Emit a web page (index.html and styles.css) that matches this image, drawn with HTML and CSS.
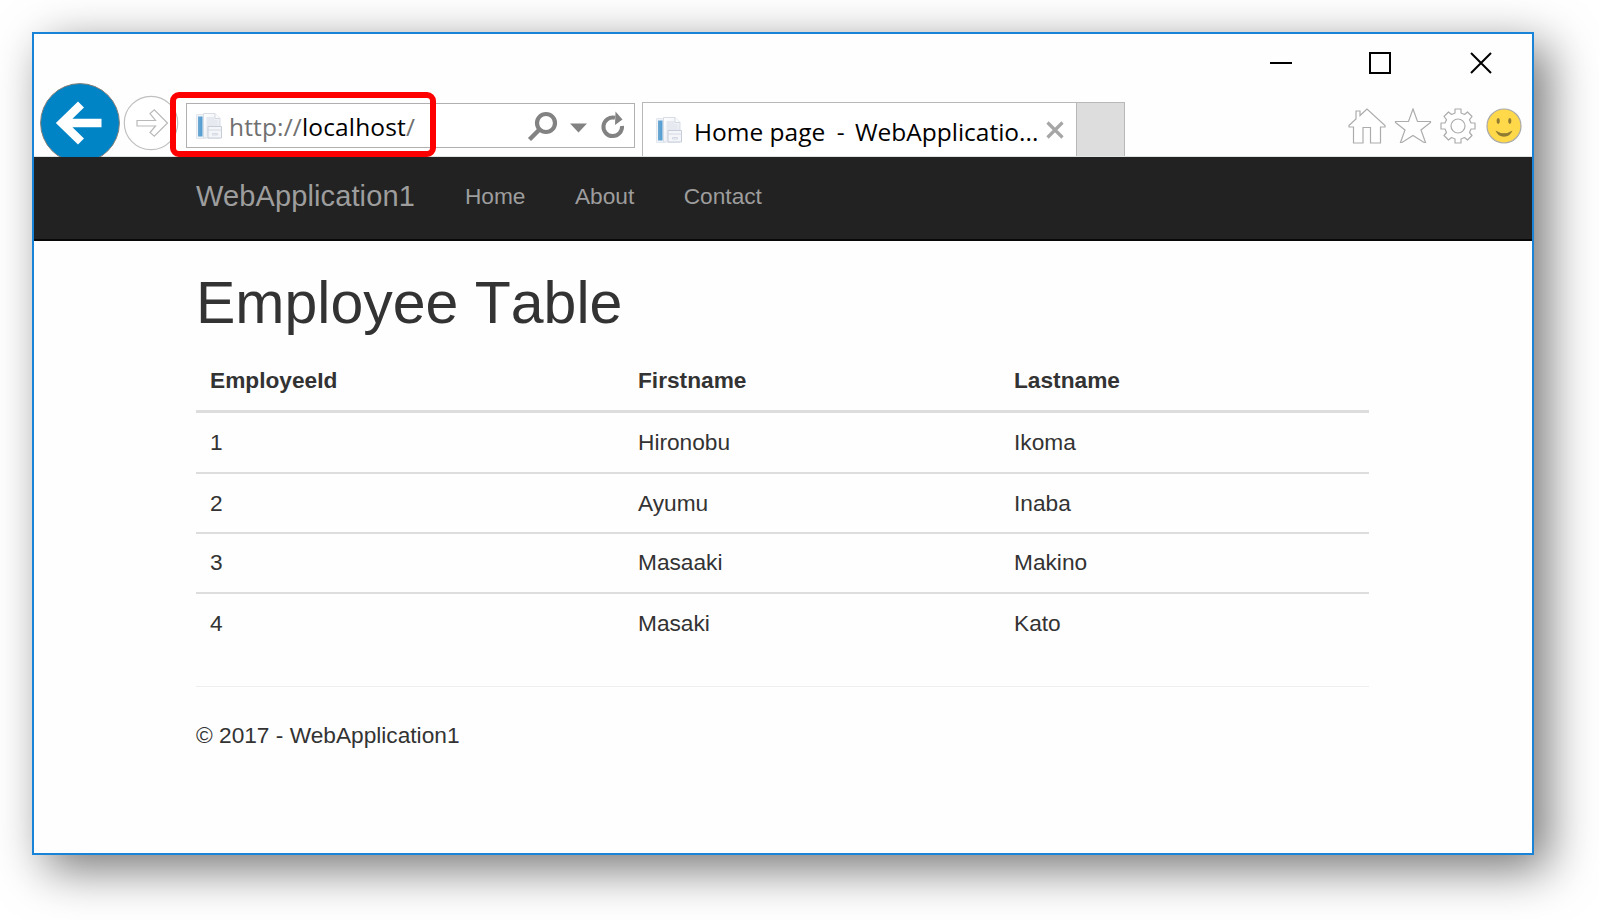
FILE: index.html
```
<!DOCTYPE html>
<html lang="en">
<head>
<meta charset="utf-8">
<title>Home page - WebApplication1</title>
<link rel="stylesheet" href="styles.css">
</head>
<body>
<svg class="defs" width="0" height="0">
  <defs>
    <linearGradient id="bar" x1="0" y1="0" x2="1" y2="0"><stop offset="0" stop-color="#6fa9d2"/><stop offset="1" stop-color="#4f9cd2"/></linearGradient>
    <linearGradient id="sheet" x1="0" y1="0" x2="1" y2="1"><stop offset="0" stop-color="#ffffff"/><stop offset="1" stop-color="#e3e7ee"/></linearGradient>
    <symbol id="page-icon" viewBox="0 0 28 28">
      <path d="M1.500 2.500h8v24h-8z" fill="#f0f4f8" stroke="#e3e8ee"/>
      <path d="M3 4.500h4.500v20H3z" fill="url(#bar)"/>
      <path d="M8.500 1.500h11.500l5 5v19.500h-16.500z" fill="url(#sheet)" stroke="#d8dde5"/>
      <path d="M11.500 5h8v3h3v6.500h-9v9h-2z" fill="#e6e9f0"/>
      <path d="M20 1.500v5h5" fill="#fbfcfd" stroke="#d3d8e1"/>
      <path d="M13 14.500h13.500v11.500h-13.500z" fill="#f4f5f9" stroke="#c6ccd8"/>
      <path d="M13 18h13.500M17.500 21.500h5v1.500h-5z" fill="none" stroke="#d3d8e2"/>
    </symbol>
  </defs>
</svg>
<div class="window">
  <header class="chrome">
    <div class="titlebar">
      <svg width="24" height="24" viewBox="0 0 24 24"><path d="M1 12h22" stroke="#000" stroke-width="2"/></svg>
      <svg width="24" height="24" viewBox="0 0 24 24"><path d="M1 2h20v20h-20z" fill="none" stroke="#000" stroke-width="2"/></svg>
      <svg width="24" height="24" viewBox="0 0 24 24"><path d="M2 2l20 20M22 2l-20 20" stroke="#000" stroke-width="2"/></svg>
    </div>
    <div class="toolbar">
      <svg class="back" width="80" height="74" viewBox="0 0 80 74"><circle cx="40" cy="40" r="39.400" fill="#0084c6" stroke="#857e78" stroke-width="1"/><path d="M61.500 40H23M41 21.500L22 40l19 18.500" fill="none" stroke="#fff" stroke-width="8.600"/></svg>
      <svg class="forward" width="56" height="56" viewBox="0 0 56 56"><circle cx="28" cy="28" r="26.700" fill="#fff" stroke="#c0c0c0" stroke-width="1.200"/><path d="M14 25.500h18.500l-5.500-7 4.300-3.700L44.500 28 31.300 41.200 27 37.500l5.500-6.500H14z" fill="#fff" stroke="#b9b9b9" stroke-width="1.200"/></svg>
      <div class="address">
        <svg width="28" height="28"><use href="#page-icon"/></svg>
        <span class="url">http://<b>localhost</b>/</span>
        <svg class="tools" width="100" height="34" viewBox="0 0 100 34">
          <circle cx="20" cy="14" r="9" fill="none" stroke="#828282" stroke-width="4.200"/><path d="M13.500 20.500L3.500 30.500" stroke="#828282" stroke-width="4.400"/>
          <path d="M44 14.500h17l-8.500 9z" fill="#828282"/>
          <path d="M89 8.800A9.300 9.300 0 1 0 96 17" fill="none" stroke="#828282" stroke-width="4"/><path d="M89.500 2.500l7 8-7.500 5.500z" fill="#828282"/>
        </svg>
      </div>
      <div class="tab">
        <svg width="28" height="28"><use href="#page-icon"/></svg>
        <span class="tab-title">Home page <span class="dash">-</span> WebApplicatio...</span>
        <svg width="18" height="18" viewBox="0 0 18 18"><path d="M1.500 1.500l15 15M16.500 1.500l-15 15" stroke="#a6a6a6" stroke-width="3.200"/></svg>
      </div>
      <div class="new-tab"></div>
      <div class="commands">
        <svg width="38" height="36" viewBox="0 0 38 36"><path d="M1 17.500L8 11V3h4v4.500L19 1l18 16.500v1.500h-4.500v16H22.500V19.500h-7.500V35H5.500V19H1z"/></svg>
        <svg width="38" height="36" viewBox="0 0 38 36"><path d="M19 1l4.500 12.500H36.500v1L27 22 31.500 34.500h-1.500L19 27.500 8 34.500H6.500l4.500-12.500L1.500 14.500v-1h13z"/></svg>
        <svg width="38" height="36" viewBox="0 0 38 36"><g stroke-linejoin="round"><path d="M16 1h6v4l3.500 1.500 3-2.500 4.500 4.500-2.500 3.200 1.500 3.300h4v6h-4l-1.500 3.500 2.500 3-4.500 4.500-3-2.500-3.500 1.500v4h-6v-4l-3.500-1.500-3 2.500L5 27.500l2.500-3L6 21H2v-6h4l1.500-3.300L5 8.500 9.500 4l3 2.500L16 5z"/><circle cx="19" cy="18" r="7"/></g></svg>
        <svg width="38" height="36" viewBox="0 0 38 36"><circle cx="19" cy="18" r="17" fill="#ffd94a" stroke="#a9a9a9"/><g fill="#8f7b32" stroke="none"><ellipse cx="13.200" cy="13" rx="1.600" ry="2.900"/><ellipse cx="24.800" cy="13" rx="1.600" ry="2.900"/><path d="M10.500 22.500Q19 28 27.500 22.500Q25 28.700 19 28.700Q13 28.700 10.500 22.500z"/></g></svg>
      </div>
      <div class="highlight"></div>
    </div>
  </header>
  <nav class="navbar"><a class="brand">WebApplication1</a><a>Home</a><a>About</a><a>Contact</a></nav>
  <main class="content">
    <h1>Employee Table</h1>
    <table class="employees">
      <thead><tr><th>EmployeeId</th><th>Firstname</th><th>Lastname</th></tr></thead>
      <tbody>
        <tr><td>1</td><td>Hironobu</td><td>Ikoma</td></tr>
        <tr><td>2</td><td>Ayumu</td><td>Inaba</td></tr>
        <tr><td>3</td><td>Masaaki</td><td>Makino</td></tr>
        <tr><td>4</td><td>Masaki</td><td>Kato</td></tr>
      </tbody>
    </table>
    <footer>© 2017 - WebApplication1</footer>
  </main>
</div>
</body>
</html>
```
FILE: styles.css
```
* { box-sizing: border-box; }
body { margin: 0; padding: 32px; height: 920px; overflow: hidden; background: #fff; color: #333; font-family: "Liberation Sans", Arial, sans-serif; font-size: 22.7px; }
svg { display: block; flex: none; }
.defs { position: absolute; }
.window { width: 1502px; height: 823px; border: 2px solid #1883d7; background: #fefefe; box-shadow: 14px 14px 45px rgba(0, 0, 0, .54); }
.chrome { height: 123px; border-bottom: 1px solid #dfe3e3; }
.titlebar { height: 49px; display: flex; justify-content: flex-end; gap: 76px; padding: 17px 39px 0 0; }
.toolbar { position: relative; height: 73px; display: flex; align-items: flex-start; padding-left: 6px; }
.forward { margin: 12px 0 0 3px; }
.address { width: 449px; height: 45px; margin: 20px 0 0 7px; border: 1px solid #b0b0b0; display: flex; align-items: center; padding: 0 8px; background: #fff; }
.url { margin: 2px 0 0 6px; color: #707070; font: 24.500px/40px "Open Sans", "Noto Sans", sans-serif; letter-spacing: .15px; white-space: nowrap; }
.url b { font-weight: 400; color: #000; }
.tools { margin-left: auto; }
.tab { width: 435px; height: 54px; margin: 19px 0 0 7px; border: solid #b8b8b8; border-width: 1px 1px 0; display: flex; align-items: center; padding: 0 12px; background: #fff; }
.tab-title { width: 346px; margin: 4px 6px 0 11px; color: #000; font: 24.500px/40px "Open Sans", "Noto Sans", sans-serif; white-space: nowrap; }
.dash { margin: 0 4px 0 5px; }
.new-tab { width: 48px; height: 54px; margin-top: 19px; background: #ddd; border: solid #b8b8b8; border-width: 1px 1px 0 0; }
.commands { margin: 25px 9px 0 auto; display: flex; gap: 7.6px; fill: #fff; stroke: #acacac; stroke-width: 1.2; }
.highlight { position: absolute; left: 136px; top: 9px; width: 266px; height: 65px; border: 6px solid #f00; border-radius: 9px; }
.navbar { height: 84px; display: flex; align-items: center; padding: 0 0 3px 162px; background: #222; border-bottom: 2px solid #080808; color: #9d9d9d; }
.navbar a { margin-right: 49.500px; }
.navbar .brand { margin-right: 50px; font-size: 29px; letter-spacing: .12px; }
.content { width: 1173px; margin-left: 162px; }
h1 { margin: 0; padding-top: 27px; font-size: 59px; line-height: 70px; font-weight: 400; font-kerning: none; }
.employees { width: 100%; margin-top: 13px; border-collapse: separate; border-spacing: 0; table-layout: fixed; }
.employees th, .employees td { padding: 0 14px; text-align: left; }
.employees th { height: 62px; border-bottom: 3px solid #ddd; }
.employees td { height: 60px; border-bottom: 2px solid #ddd; }
.employees tbody tr:first-child td { height: 61px; }
.employees tbody tr:nth-child(n+3) td { padding-bottom: 1px; }
.employees tr:last-child td { border-bottom: 0; }
.employees th:nth-child(1) { width: 428px; }
.employees th:nth-child(2) { width: 376px; }
footer { margin-top: 32px; padding-top: 35px; border-top: 1px solid #eee; }
```
